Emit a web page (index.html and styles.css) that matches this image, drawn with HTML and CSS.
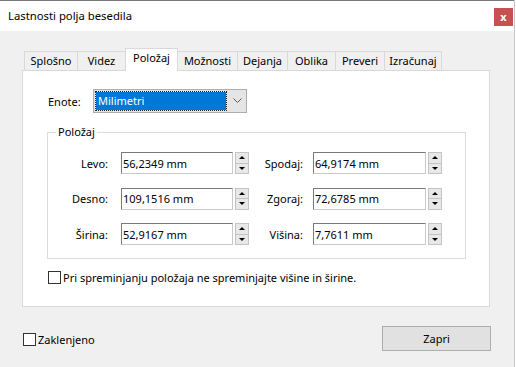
FILE: index.html
```html
<!DOCTYPE html>
<html lang="sl">
<head>
    <meta charset="UTF-8">
    <meta name="viewport" content="width=device-width, initial-scale=1.0">
    <title>Lastnosti polja besedila</title>
    <link rel="stylesheet" href="styles.css">
</head>
<body>

    <div class="dialog">

        <div class="titlebar">
            <div class="title">Lastnosti polja besedila</div>
            <button class="close">x</button>
        </div>

        <div class="dialog-body">

            <div class="tabs">
                <div class="tab">Splošno</div>
                <div class="tab">Videz</div>
                <div class="tab active">Položaj</div>
                <div class="tab">Možnosti</div>
                <div class="tab">Dejanja</div>
                <div class="tab">Oblika</div>
                <div class="tab">Preveri</div>
                <div class="tab">Izračunaj</div>
            </div>

            <div class="panel">
                <div class="units-row">
                    <label class="units-label">Enote:</label>
                    <div class="select">
                        <span class="select-value">Milimetri</span>
                        <svg class="chevron" width="9" height="6" viewBox="0 0 9 6">
                            <polyline points="0.5,0.5 4.5,4.5 8.5,0.5" fill="none" stroke="#5a5a5a" stroke-width="1"/>
                        </svg>
                    </div>
                </div>

                <fieldset class="group">
                    <legend>Položaj</legend>
                    <div class="pos-grid">
                        <label class="field-label">Levo:</label>
                        <input class="field" type="text" value="56,2349 mm">
                        <div class="spin"><span class="spin-up"></span><span class="spin-down"></span></div>
                        <label class="field-label second">Spodaj:</label>
                        <input class="field" type="text" value="64,9174 mm">
                        <div class="spin"><span class="spin-up"></span><span class="spin-down"></span></div>

                        <label class="field-label">Desno:</label>
                        <input class="field" type="text" value="109,1516 mm">
                        <div class="spin"><span class="spin-up"></span><span class="spin-down"></span></div>
                        <label class="field-label second">Zgoraj:</label>
                        <input class="field" type="text" value="72,6785 mm">
                        <div class="spin"><span class="spin-up"></span><span class="spin-down"></span></div>

                        <label class="field-label">Širina:</label>
                        <input class="field" type="text" value="52,9167 mm">
                        <div class="spin"><span class="spin-up"></span><span class="spin-down"></span></div>
                        <label class="field-label second">Višina:</label>
                        <input class="field" type="text" value="7,7611 mm">
                        <div class="spin"><span class="spin-up"></span><span class="spin-down"></span></div>
                    </div>
                </fieldset>

                <label class="check keep-size">
                    <input type="checkbox">
                    <span>Pri spreminjanju položaja ne spreminjajte višine in širine.</span>
                </label>
            </div>

            <div class="footer">
                <label class="check">
                    <input type="checkbox">
                    <span>Zaklenjeno</span>
                </label>
                <button class="btn">Zapri</button>
            </div>

        </div>
    </div>

</body>
</html>
```

FILE: styles.css
```css
:root{
    --colbg: #f0f0f0;
    --colwhite: #fff;
    --colline: #d9d9d9;
    --colbtn: #e1e1e1;
    --colbtnline: #adadad;
    --colblue: #0078d7;
}
body{
    margin: 0;
    background: var(--colwhite);
    color: #000;

    font-family: "Noto Sans", "Open Sans", sans-serif;
    font-size: 11px;
}
.dialog{
    display: flex;
    flex-direction: column;
    width: 514px;
    height: 367px;
    background: var(--colbg);
    border-right: 1px solid #c8c8c8;
}
.titlebar{
    display: flex;
    justify-content: space-between;
    align-items: flex-start;
    height: 30px;
    background: var(--colwhite);
    border-top: 1px solid #7a7a7a;
}
.titlebar .title{
    padding: 7px 0 0 8px;
    line-height: 16px;
    font-size: 11.3px;
}
.titlebar .close{
    width: 19px;
    height: 18px;
    margin: 7px 1px 0 0;
    padding: 0;
    border: none;
    background: #c75050;
    color: var(--colwhite);
    font-family: inherit;
    font-size: 11px;
    font-weight: 700;
    line-height: 16px;
}
.dialog-body{
    padding: 17px 0 0 22px;
}

/* tabs */
.tabs{
    display: flex;
    align-items: flex-end;
    height: 22px;
    margin-left: 2px;
}
.tab{
    box-sizing: border-box;
    height: 19px;
    margin-left: -1px;
    border: 1px solid var(--colline);
    border-bottom: none;
    background: var(--colbg);
    text-align: center;
    line-height: 18px;
}
.tab:first-child{ margin-left: 0; width: 54px; }
.tab:nth-child(2){ width: 49px; }
.tab:nth-child(3){ width: 53px; }
.tab:nth-child(4){ width: 61px; }
.tab:nth-child(5){ width: 51px; }
.tab:nth-child(6){ width: 49px; }
.tab:nth-child(7){ width: 50px; }
.tab:nth-child(8){ width: 58px; }
.tab.active{
    position: relative;
    z-index: 1;
    height: 23px;
    margin-bottom: -1px;
    background: var(--colwhite);
    line-height: 18px;
}

/* panel */
.panel{
    box-sizing: border-box;
    width: 468px;
    height: 237px;
    padding: 18px 0 0 25px;
    background: var(--colwhite);
    border: 1px solid var(--colline);
}
.units-row{
    display: flex;
    align-items: center;
}
.units-label{
    width: 45px;
}
.select{
    box-sizing: border-box;
    display: flex;
    align-items: center;
    width: 154px;
    height: 24px;
    padding: 2px;
    background: #e5e5e5;
    border: 1px solid var(--colbtnline);
}
.select-value{
    box-sizing: border-box;
    width: 130px;
    height: 18px;
    padding-left: 2px;
    background: var(--colblue);
    outline: 1px dotted #222;
    color: var(--colwhite);
    line-height: 17px;
}
.chevron{
    margin-left: 7px;
}

/* position group */
.group{
    box-sizing: border-box;
    width: 419px;
    margin: 11px 0 0 -1px;
    padding: 12px 0 13px 0;
    border: 1px solid #dcdcdc;
}
.group legend{
    margin-left: 8px;
    padding: 0 2px;
    line-height: 16px;
}
.pos-grid{
    display: grid;
    grid-template-columns: 73px 112px 16px 64px 113px 17px;
    grid-auto-rows: 22px;
    row-gap: 13.5px;
    align-items: center;
}
.field-label{
    padding-right: 13px;
    text-align: right;
}
.field-label.second{
    padding-right: 10px;
}
.field{
    box-sizing: border-box;
    width: 100%;
    height: 22px;
    margin: 0;
    padding: 0 0 0 1px;
    border: 1px solid;
    border-color: #7a7a7a #c9c9c9 #c9c9c9 #7a7a7a;
    font-family: inherit;
    font-size: 11px;
    color: #000;
}
.spin{
    display: flex;
    flex-direction: column;
    width: 14px;
    height: 22px;
    margin-left: 2px;
}
.spin span{
    display: flex;
    flex: 1;
    align-items: center;
    justify-content: center;
    background: #e8e8e8;
    border: 1px solid #c4c4c4;
}
.spin span + span{
    border-top: none;
}
.spin-up::after{
    content: "";
    border-left: 3px solid transparent;
    border-right: 3px solid transparent;
    border-bottom: 3px solid #000;
}
.spin-down::after{
    content: "";
    border-left: 3px solid transparent;
    border-right: 3px solid transparent;
    border-top: 3px solid #000;
}

/* checkboxes */
.check{
    display: flex;
    align-items: center;
    gap: 2px;
}
.check input{
    appearance: none;
    box-sizing: border-box;
    width: 13px;
    height: 13px;
    margin: 0;
    background: var(--colwhite);
    border: 1px solid #333;
}
.keep-size{
    margin-top: 11px;
}

/* footer */
.footer{
    display: flex;
    justify-content: space-between;
    align-items: center;
    width: 468px;
    margin: 19px 0 0 1px;
}
.footer .check{
    margin-top: 1px;
}
.btn{
    width: 109px;
    height: 25px;
    background: var(--colbtn);
    border: 1px solid var(--colbtnline);
    font-family: inherit;
    font-size: 11px;
    color: #000;
}
```
